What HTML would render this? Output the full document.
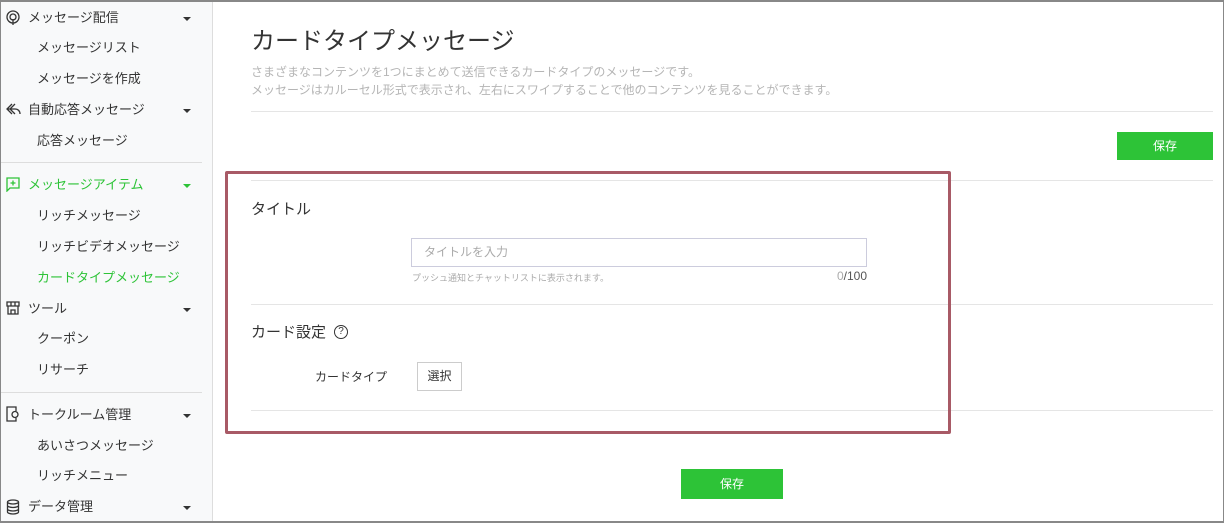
<!DOCTYPE html>
<html><head><meta charset="utf-8"><style>
*{margin:0;padding:0;box-sizing:border-box}
body{width:1224px;height:523px;overflow:hidden;font-family:"Liberation Sans","Noto Sans CJK JP",sans-serif;background:#fff;position:relative;color:#333}
.frame{position:absolute;inset:0;border:1px solid #888;border-top:2px solid #888;border-bottom:2px solid #888;pointer-events:none;z-index:5}
.side{position:absolute;left:0;top:0;width:213px;height:523px;background:#f8f9fa;border-right:1px solid #ddd}
.it{position:absolute;left:28px;font-size:13px;line-height:16px;color:#333;white-space:nowrap}
.sub{left:37px}
.g{color:#2dc337}
.car{position:absolute;left:183px;width:0;height:0;border-left:4px solid transparent;border-right:4px solid transparent;border-top:4px solid #333}
.hr{position:absolute;left:0;width:202px;height:1px;background:#ddd}
.ic{position:absolute;left:6px}
.abs{position:absolute}
.btn{position:absolute;background:#2dc337;color:#fff;font-size:12px;text-align:center}
.line{position:absolute;left:251px;width:962px;height:1px;background:#e5e5e5}
</style></head><body>
<div class="side">
<svg class="ic" style="top:10px" width="14" height="16" viewBox="0 0 14 16" fill="none" stroke="#333" stroke-width="1.3"><circle cx="7" cy="7" r="6"/><circle cx="7" cy="7" r="3"/><path d="M7 9v6"/></svg>
<div class="it" style="top:10px">メッセージ配信</div><div class="car" style="top:17px"></div>
<div class="it sub" style="top:40px">メッセージリスト</div>
<div class="it sub" style="top:71px">メッセージを作成</div>
<svg class="ic" style="top:102px" width="16" height="14" viewBox="0 0 16 14" fill="none" stroke="#333" stroke-width="1.3"><path d="M6 2L1 7l5 5M1 7h8c3 0 5 2 5 5M9 2L4 7l5 5"/></svg>
<div class="it" style="top:102px">自動応答メッセージ</div><div class="car" style="top:109px"></div>
<div class="it sub" style="top:133px">応答メッセージ</div>
<div class="hr" style="top:162px"></div>
<svg class="ic" style="top:177px" width="14" height="15" viewBox="0 0 14 15" fill="none" stroke="#2dc337" stroke-width="1.3"><path d="M1 1h12v10H4l-3 3z"/><path d="M7 3.5v5M4.5 6h5"/></svg>
<div class="it g" style="top:177px">メッセージアイテム</div><div class="car" style="top:184px;border-top-color:#2dc337"></div>
<div class="it sub" style="top:208px">リッチメッセージ</div>
<div class="it sub" style="top:239px">リッチビデオメッセージ</div>
<div class="it sub g" style="top:270px">カードタイプメッセージ</div>
<svg class="ic" style="top:301px" width="14" height="14" viewBox="0 0 14 14" fill="none" stroke="#333" stroke-width="1.3"><path d="M1 1h12v4H1zM2 5v8h10V5M5 13V9h4v4M5 1v4M9 1v4"/></svg>
<div class="it" style="top:301px">ツール</div><div class="car" style="top:308px"></div>
<div class="it sub" style="top:331px">クーポン</div>
<div class="it sub" style="top:362px">リサーチ</div>
<div class="hr" style="top:392px"></div>
<svg class="ic" style="top:406px" width="14" height="16" viewBox="0 0 14 16" fill="none" stroke="#333" stroke-width="1.3"><path d="M10 5V1H1v14h9v-3"/><circle cx="9" cy="8.5" r="3"/></svg>
<div class="it" style="top:407px">トークルーム管理</div><div class="car" style="top:414px"></div>
<div class="it sub" style="top:438px">あいさつメッセージ</div>
<div class="it sub" style="top:468px">リッチメニュー</div>
<svg class="ic" style="top:499px" width="14" height="16" viewBox="0 0 14 16" fill="none" stroke="#333" stroke-width="1.3"><ellipse cx="7" cy="3" rx="5.5" ry="2"/><path d="M1.5 3v10c0 1.1 2.5 2 5.5 2s5.5-.9 5.5-2V3M1.5 6.5c0 1.1 2.5 2 5.5 2s5.5-.9 5.5-2M1.5 10c0 1.1 2.5 2 5.5 2s5.5-.9 5.5-2"/></svg>
<div class="it" style="top:499px">データ管理</div><div class="car" style="top:506px"></div>
</div>

<div class="abs" style="left:251px;top:27px;font-size:24px;color:#333;line-height:30px">カードタイプメッセージ</div>
<div class="abs" style="left:251px;top:63px;font-size:12px;color:#b5b5b5;line-height:18px">さまざまなコンテンツを1つにまとめて送信できるカードタイプのメッセージです。<br>メッセージはカルーセル形式で表示され、左右にスワイプすることで他のコンテンツを見ることができます。</div>
<div class="line" style="top:111px"></div>
<div class="btn" style="left:1117px;top:132px;width:96px;height:28px;line-height:28px">保存</div>
<div class="line" style="top:180px"></div>
<div class="abs" style="left:251px;top:201px;font-size:15px;line-height:18px">タイトル</div>
<div class="abs" style="left:411px;top:238px;width:456px;height:29px;border:1px solid #ccd;padding-left:12px;font-size:12px;color:#aaa;line-height:27px">タイトルを入力</div>
<div class="abs" style="left:412px;top:271px;font-size:9px;color:#aaa">プッシュ通知とチャットリストに表示されます。</div>
<div class="abs" style="left:767px;width:100px;text-align:right;top:269px;font-size:12px;color:#555"><span style="color:#aaa">0</span>/100</div>
<div class="line" style="top:304px"></div>
<div class="abs" style="left:251px;top:324px;font-size:15px;line-height:18px">カード設定</div>
<div class="abs" style="left:334px;top:325px;width:14px;height:14px;border:1px solid #333;border-radius:50%;font-size:10px;text-align:center;line-height:12px">?</div>
<div class="abs" style="left:315px;top:368px;font-size:12px">カードタイプ</div>
<div class="abs" style="left:417px;top:362px;width:45px;height:29px;border:1px solid #ccc;font-size:12px;text-align:center;line-height:27px">選択</div>
<div class="line" style="top:410px"></div>
<div class="abs" style="left:225px;top:171px;width:726px;height:263px;border:3px solid #a85a66;border-radius:2px"></div>
<div class="btn" style="left:681px;top:469px;width:102px;height:30px;line-height:30px">保存</div>
<div class="frame"></div>
</body></html>
